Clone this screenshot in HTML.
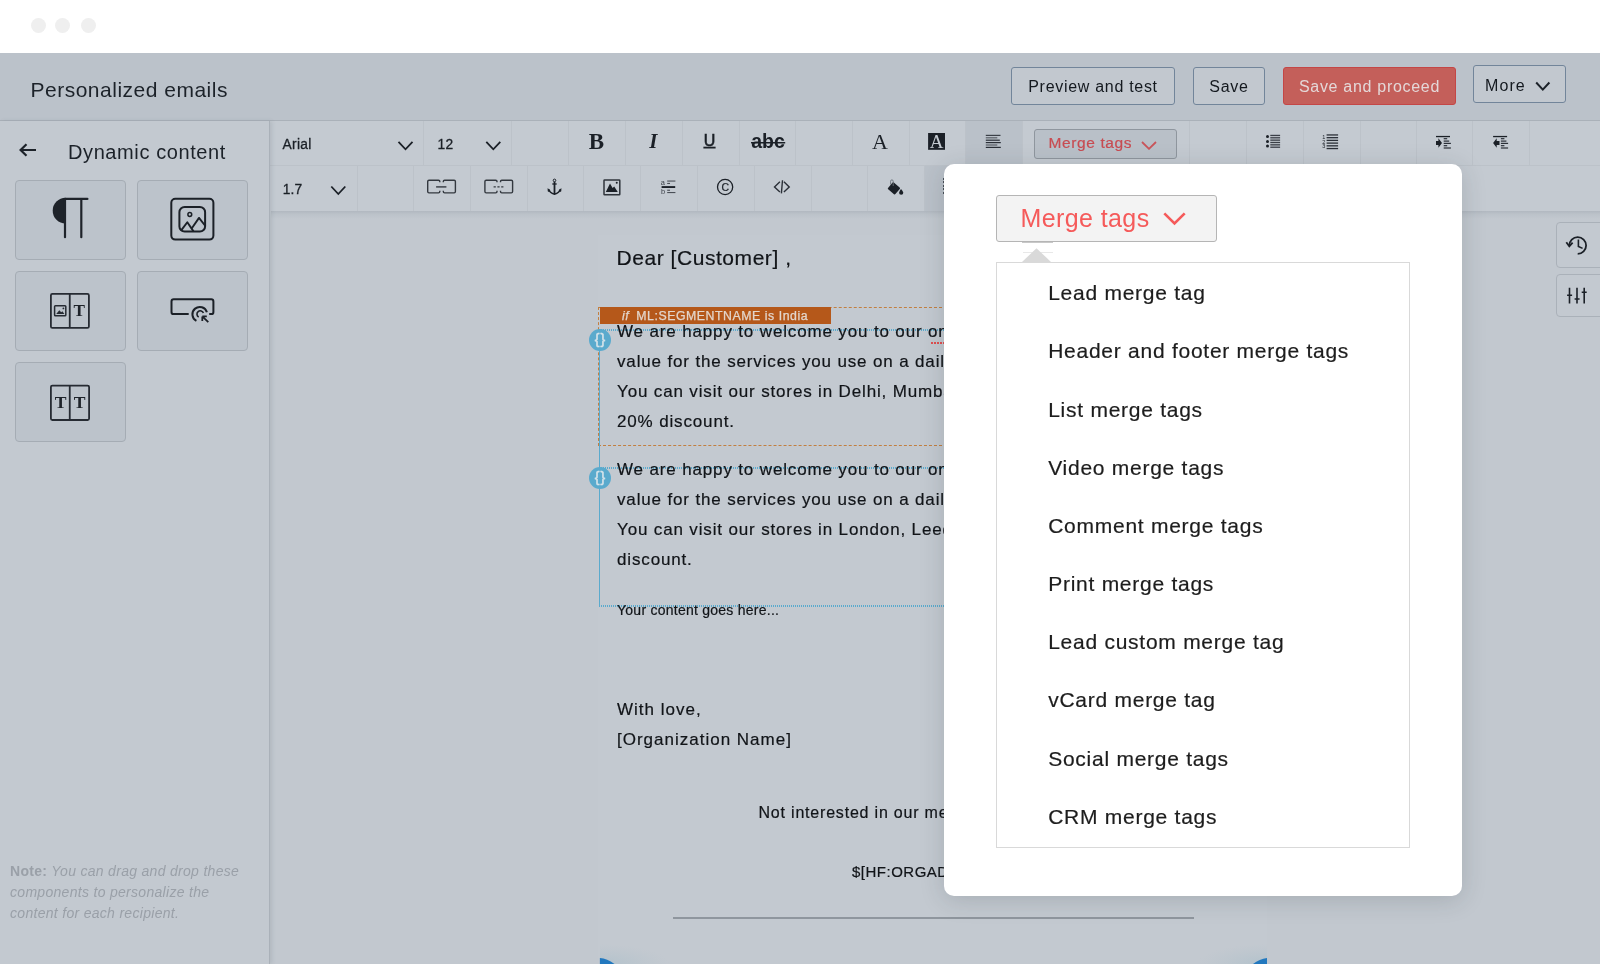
<!DOCTYPE html>
<html><head><meta charset="utf-8">
<style>
*{box-sizing:border-box;margin:0;padding:0}
html,body{will-change:transform;width:1600px;height:964px;overflow:hidden;background:#c2c8cf;font-family:"Liberation Sans",sans-serif;color:#1c2229}
.abs{position:absolute}
#top{left:0;top:0;width:1600px;height:53px;background:#fff}
.dot{position:absolute;top:18px;width:15px;height:15px;border-radius:50%;background:#efefef}
#hdr{left:0;top:53px;width:1600px;height:68px;background:#bbc2ca;border-bottom:1px solid #aab1b9}
#hdr .title{position:absolute;left:30.5px;top:25px;font-size:21px;letter-spacing:0.5px;color:#1c2229;line-height:24px}
.btn{position:absolute;top:14px;height:38px;border:1.5px solid #72859a;border-radius:3px;background:#c2c8cf;font-size:16px;line-height:38px;text-align:center;color:#14191f;letter-spacing:0.7px}
#side{left:0;top:121px;width:270px;height:843px;background:#c3c9d0;border-right:1px solid #aab1b9;box-shadow:2px 0 4px rgba(60,70,80,0.12);z-index:2}
.tile{position:absolute;width:111px;height:80px;border:1px solid #a5acb4;border-radius:4px;background:#bcc3cb}
.tile svg{position:absolute;left:0;top:0}
#tb{left:270px;top:121px;width:1330px;height:90px;background:#c4cad1}
.vd{position:absolute;width:1px;background:#bcc2c9}
.hd{position:absolute;left:0;width:1330px;height:1px;background:#bcc2c9}
#canvas{left:271px;top:211px;width:1329px;height:753px;background:#c2c8cf}
.et{position:absolute;font-size:17px;letter-spacing:0.85px;color:#111418;white-space:nowrap;line-height:20px;-webkit-text-stroke:0.2px #111418}
#modal{left:944px;top:164px;width:518px;height:732px;background:#fff;border-radius:10px;box-shadow:0 4px 24px rgba(30,40,50,0.17);z-index:3}
.bc{position:absolute;width:22px;height:22px;border-radius:50%;background:#5aaacd;color:#d5e3ea;font-size:14px;font-weight:normal;line-height:21px;text-align:center;letter-spacing:1px;text-indent:1px;-webkit-text-stroke:0.5px #d5e3ea}
.dotl{position:absolute;height:2px;background:repeating-linear-gradient(90deg,#5aaacd 0 1px,transparent 1px 2px)}
.mi{position:absolute;left:104.2px;font-size:21px;letter-spacing:0.74px;color:#1d1d1d;white-space:nowrap;line-height:24px;-webkit-text-stroke:0.2px #1d1d1d}
</style></head><body>
<div id="top" class="abs">
  <div class="dot" style="left:31px"></div>
  <div class="dot" style="left:55px"></div>
  <div class="dot" style="left:81px"></div>
</div>
<div id="hdr" class="abs">
  <div class="title">Personalized emails</div>
  <div class="btn" style="left:1011px;width:164px">Preview and test</div>
  <div class="btn" style="left:1193px;width:72px">Save</div>
  <div class="btn" style="left:1283px;width:173px;background:#c45f5a;border-color:#c44646;color:#e4d8d8">Save and proceed</div>
  <div class="btn" style="left:1473px;top:12px;width:93px;text-align:left;padding-left:11px;line-height:40px;letter-spacing:1.1px">More
    <svg class="abs" style="left:60.5px;top:14.5px" width="16" height="11" viewBox="0 0 16 11"><path d="M1.2 1.5 L7.8 8.6 L14.4 1.5" fill="none" stroke="#1c2229" stroke-width="2"/></svg>
  </div>
</div>
<div id="side" class="abs">
  <svg class="abs" style="left:19px;top:22px" width="18" height="14" viewBox="0 0 18 14"><path d="M17 7 H2 M7.5 1.2 L1.6 7 L7.5 12.8" fill="none" stroke="#1c2229" stroke-width="2.2"/></svg>
  <div class="abs" style="left:68px;top:19px;font-size:20px;letter-spacing:0.6px;line-height:24px;color:#1c2229">Dynamic content</div>
  <div class="tile" style="left:15px;top:59px"><svg width="110" height="79" viewBox="0 0 110 79"><path d="M49 17.9 H71.4" stroke="#1e232a" stroke-width="2.2" stroke-linecap="round"/><path d="M49.6 16.8 A12.9 12.9 0 0 0 49.6 42.6 Z" fill="#1e232a"/><path d="M49 18 V56.2" stroke="#1e232a" stroke-width="2.2" stroke-linecap="round"/><path d="M65.3 18 V56.2" stroke="#1e232a" stroke-width="2.2" stroke-linecap="round"/></svg></div>
  <div class="tile" style="left:137px;top:59px"><svg width="110" height="79" viewBox="0 0 110 79"><rect x="33.3" y="17.7" width="42.1" height="40.9" rx="4" fill="none" stroke="#1b2027" stroke-width="2"/><rect x="41.4" y="26" width="25.7" height="24.6" rx="5.2" fill="none" stroke="#1b2027" stroke-width="2"/><circle cx="51.8" cy="33.5" r="1.9" fill="none" stroke="#1b2027" stroke-width="1.5"/><path d="M43 49.6 L49.3 41.2 L55.5 50.4 M54 47 L61 36.9 L67.4 45" fill="none" stroke="#1b2027" stroke-width="1.9" stroke-linejoin="round"/></svg></div>
  <div class="tile" style="left:15px;top:150px"><svg width="110" height="79" viewBox="0 0 110 79"><rect x="34.9" y="21.9" width="38" height="34" rx="1.5" fill="none" stroke="#262b33" stroke-width="1.8"/><path d="M53.75 21.9 V55.9" stroke="#262b33" stroke-width="1.8"/><rect x="38.6" y="33.8" width="11.2" height="9.9" rx="0.8" fill="none" stroke="#262b33" stroke-width="1.5"/><path d="M40.2 41.9 L43.3 38.3 L45.2 40.3 L46.4 39.2 L48.4 41.9 Z" fill="#262b33"/><circle cx="47.4" cy="36.4" r="0.9" fill="#262b33"/><text x="63.35" y="44.4" text-anchor="middle" font-family="Liberation Serif" font-weight="bold" font-size="17.2" fill="#1e232a">T</text></svg></div>
  <div class="tile" style="left:137px;top:150px"><svg width="110" height="79" viewBox="0 0 110 79"><path d="M50.7 42.1 H35.7 Q33.5 42.1 33.5 39.9 V29.5 Q33.5 27.3 35.7 27.3 H73.2 Q75.4 27.3 75.4 29.5 V39.9 Q75.4 42.1 73.2 42.1 H71.2" fill="none" stroke="#1b2027" stroke-width="2"/><path d="M58.4 48.9 A7.4 7.4 0 1 1 68.9 40.2" fill="none" stroke="#1b2027" stroke-width="2"/><path d="M60.7 45 A3.3 3.3 0 1 1 65.4 41.1" fill="none" stroke="#1b2027" stroke-width="1.6"/><path d="M64.3 44.4 L70.3 50.2 M64.3 44.4 V49 M64.3 44.4 H68.8" fill="none" stroke="#1b2027" stroke-width="1.8"/></svg></div>
  <div class="tile" style="left:15px;top:241px"><svg width="110" height="79" viewBox="0 0 110 79"><rect x="34.9" y="22.6" width="38.2" height="34.4" rx="1.5" fill="none" stroke="#262b33" stroke-width="1.8"/><path d="M53.75 22.6 V57" stroke="#262b33" stroke-width="1.8"/><text x="44.55" y="45.2" text-anchor="middle" font-family="Liberation Serif" font-weight="bold" font-size="17.6" fill="#1e232a">T</text><text x="63.55" y="45.2" text-anchor="middle" font-family="Liberation Serif" font-weight="bold" font-size="17.6" fill="#1e232a">T</text></svg></div>
  <div class="abs" style="left:10px;top:740px;width:250px;font-size:14px;line-height:21px;letter-spacing:0.3px;font-style:italic;color:#9aa0a8"><b style="font-style:normal">Note:</b> You can drag and drop these components to personalize the content for each recipient.</div>
</div>
<div id="tb" class="abs"><div class="abs" style="left:695px;top:0;width:56.75px;height:44px;background:#bac1c9"></div><div class="abs" style="left:653.6px;top:45px;width:56.7px;height:45px;background:#bac1c9"></div><div class="vd" style="left:153.4px;top:0;height:44px"></div><div class="vd" style="left:241.4px;top:0;height:44px"></div><div class="vd" style="left:298.2px;top:0;height:44px"></div><div class="vd" style="left:354.8px;top:0;height:44px"></div><div class="vd" style="left:411.7px;top:0;height:44px"></div><div class="vd" style="left:468.5px;top:0;height:44px"></div><div class="vd" style="left:525.2px;top:0;height:44px"></div><div class="vd" style="left:581.6px;top:0;height:44px"></div><div class="vd" style="left:638.5px;top:0;height:44px"></div><div class="vd" style="left:695.0px;top:0;height:44px"></div><div class="vd" style="left:751.8px;top:0;height:44px"></div><div class="vd" style="left:919.0px;top:0;height:44px"></div><div class="vd" style="left:975.8px;top:0;height:44px"></div><div class="vd" style="left:1032.7px;top:0;height:44px"></div><div class="vd" style="left:1089.6px;top:0;height:44px"></div><div class="vd" style="left:1145.6px;top:0;height:44px"></div><div class="vd" style="left:1202.2px;top:0;height:44px"></div><div class="vd" style="left:1259.4px;top:0;height:44px"></div><div class="vd" style="left:86.8px;top:45px;height:45px"></div><div class="vd" style="left:143.2px;top:45px;height:45px"></div><div class="vd" style="left:200.0px;top:45px;height:45px"></div><div class="vd" style="left:256.8px;top:45px;height:45px"></div><div class="vd" style="left:313.4px;top:45px;height:45px"></div><div class="vd" style="left:370.2px;top:45px;height:45px"></div><div class="vd" style="left:427.4px;top:45px;height:45px"></div><div class="vd" style="left:483.5px;top:45px;height:45px"></div><div class="vd" style="left:540.7px;top:45px;height:45px"></div><div class="vd" style="left:597.2px;top:45px;height:45px"></div><div class="vd" style="left:653.6px;top:45px;height:45px"></div><div class="vd" style="left:710.3px;top:45px;height:45px"></div><div class="hd" style="top:44px"></div><svg class="abs" style="left:0;top:0" width="1330" height="90" font-family="Liberation Sans"><text x="12.5" y="27.8" font-size="13.8" letter-spacing="0.3" fill="#1b2027" stroke="#1b2027" stroke-width="0.3">Arial</text><path d="M128.5 20.8 L135.5 28.3 L142.5 20.8" fill="none" stroke="#1b2027" stroke-width="1.8"/><text x="167.5" y="27.8" font-size="13.8" letter-spacing="0.3" fill="#1b2027" stroke="#1b2027" stroke-width="0.3">12</text><path d="M216.3 20.8 L223.3 28.3 L230.3 20.8" fill="none" stroke="#1b2027" stroke-width="1.8"/><text x="326.5" y="28.1" text-anchor="middle" font-family="Liberation Serif" font-weight="bold" font-size="23" fill="#1b2027">B</text><text x="383.3" y="27.4" text-anchor="middle" font-family="Liberation Serif" font-weight="bold" font-style="italic" font-size="21" fill="#1b2027">I</text><text x="439.5" y="24.7" text-anchor="middle" font-size="16" fill="#1b2027" stroke="#1b2027" stroke-width="0.6">U</text><rect x="433.4" y="25.7" width="12.2" height="1.8" fill="#1b2027"/><text x="498" y="27.4" text-anchor="middle" font-weight="bold" font-size="19.5" fill="#1b2027">abc</text><rect x="481" y="21" width="34.2" height="1.5" fill="#1b2027"/><text x="610" y="27.9" text-anchor="middle" font-family="Liberation Serif" font-size="22" fill="#1b2027">A</text><rect x="658.1" y="12" width="16.9" height="16.8" fill="#1b2027"/><text x="666.6" y="27" text-anchor="middle" font-family="Liberation Serif" font-size="19" fill="#c4cad1">A</text><rect x="715.8" y="13.8" width="14.7" height="1.2" fill="#3b4048"/><rect x="715.8" y="16.2" width="11.5" height="1.2" fill="#5a6068"/><rect x="715.8" y="18.6" width="14" height="1.2" fill="#2b3038"/><rect x="715.8" y="21" width="15" height="1.2" fill="#2b3038"/><rect x="715.8" y="23.4" width="11.5" height="1.2" fill="#5a6068"/><rect x="715.8" y="25.8" width="15" height="1.2" fill="#2b3038"/><circle cx="997.5" cy="15.6" r="1.5" fill="#1b2027"/><circle cx="997.5" cy="20.4" r="1.5" fill="#1b2027"/><circle cx="997.5" cy="24.9" r="1.5" fill="#1b2027"/><rect x="1000.3" y="13.80" width="9.8" height="1.3" fill="#3a3f47"/><rect x="1000.3" y="16.15" width="9.8" height="1.3" fill="#3a3f47"/><rect x="1000.3" y="18.50" width="9.8" height="1.3" fill="#3a3f47"/><rect x="1000.3" y="20.85" width="9.8" height="1.3" fill="#3a3f47"/><rect x="1000.3" y="23.20" width="9.8" height="1.3" fill="#3a3f47"/><rect x="1000.3" y="25.55" width="9.8" height="1.3" fill="#3a3f47"/><text x="1053.8" y="17.6" text-anchor="middle" font-size="5.5" fill="#1b2027">1</text><text x="1053.8" y="22.6" text-anchor="middle" font-size="5.5" fill="#1b2027">2</text><text x="1053.8" y="27.3" text-anchor="middle" font-size="5.5" fill="#1b2027">3</text><rect x="1056.6" y="13.30" width="11.5" height="1.3" fill="#2b3038"/><rect x="1056.6" y="16.02" width="11.5" height="1.3" fill="#2b3038"/><rect x="1056.6" y="18.74" width="11.5" height="1.3" fill="#2b3038"/><rect x="1056.6" y="21.46" width="11.5" height="1.3" fill="#2b3038"/><rect x="1056.6" y="24.18" width="11.5" height="1.3" fill="#2b3038"/><rect x="1056.6" y="26.90" width="11.5" height="1.3" fill="#2b3038"/><rect x="1166" y="14.9" width="14" height="1.3" fill="#1b2027"/><path d="M1172 21.9 L1168.4 17.2 V19.9 H1166 V23.9 H1168.4 V26.8 Z" fill="#1b2027"/><rect x="1173.7" y="17.1" width="3.5" height="1.2" fill="#2b3038"/><rect x="1173.7" y="19.5" width="5.5" height="1.2" fill="#2b3038"/><rect x="1173.7" y="21.8" width="7.2" height="1.2" fill="#2b3038"/><rect x="1173.7" y="24.1" width="3.5" height="1.2" fill="#2b3038"/><rect x="1173.7" y="26.4" width="7.2" height="1.2" fill="#2b3038"/><rect x="1223.1" y="14.9" width="14" height="1.3" fill="#1b2027"/><path d="M1223.1 21.9 L1226.6999999999998 17.2 V19.9 H1229.5 V23.9 H1226.6999999999998 V26.8 Z" fill="#1b2027"/><rect x="1230.8999999999999" y="17.1" width="3.5" height="1.2" fill="#2b3038"/><rect x="1230.8999999999999" y="19.5" width="5.5" height="1.2" fill="#2b3038"/><rect x="1230.8999999999999" y="21.8" width="7.2" height="1.2" fill="#2b3038"/><rect x="1230.8999999999999" y="24.1" width="3.5" height="1.2" fill="#2b3038"/><rect x="1230.8999999999999" y="26.4" width="7.2" height="1.2" fill="#2b3038"/><text x="12.7" y="72.8" font-size="13.8" letter-spacing="0.2" fill="#1b2027" stroke="#1b2027" stroke-width="0.3">1.7</text><path d="M61.3 65.5 L68.3 73.0 L75.3 65.5" fill="none" stroke="#1b2027" stroke-width="1.8"/><path d="M169.8 61.3 V60.5 Q169.8 59.2 168.5 59.2 H159 Q157.7 59.2 157.7 60.5 V70.6 Q157.7 71.9 159 71.9 H168.5 Q169.8 71.9 169.8 70.6 V69.8" fill="none" stroke="#33383f" stroke-width="1.4"/><path d="M173.3 61.3 V60.5 Q173.3 59.2 174.6 59.2 H184.1 Q185.4 59.2 185.4 60.5 V70.6 Q185.4 71.9 184.1 71.9 H174.6 Q173.3 71.9 173.3 70.6 V69.8" fill="none" stroke="#33383f" stroke-width="1.4"/><path d="M166.1 65.9 H176.4" stroke="#33383f" stroke-width="1.4"/><path d="M227.0 61.3 V60.5 Q227.0 59.2 225.7 59.2 H216.2 Q214.89999999999998 59.2 214.89999999999998 60.5 V70.6 Q214.89999999999998 71.9 216.2 71.9 H225.7 Q227.0 71.9 227.0 70.6 V69.8" fill="none" stroke="#33383f" stroke-width="1.4"/><path d="M230.5 61.3 V60.5 Q230.5 59.2 231.79999999999998 59.2 H241.29999999999998 Q242.6 59.2 242.6 60.5 V70.6 Q242.6 71.9 241.29999999999998 71.9 H231.79999999999998 Q230.5 71.9 230.5 70.6 V69.8" fill="none" stroke="#33383f" stroke-width="1.4"/><path d="M223.6 65.9 H234.0" stroke="#33383f" stroke-width="1.2" stroke-dasharray="2.2 1.6"/><circle cx="284.5" cy="59.4" r="1.3" fill="none" stroke="#1b2027" stroke-width="1"/><path d="M284.5 60.8 V73" stroke="#1b2027" stroke-width="1.8"/><path d="M282.3 63 H286.7" stroke="#1b2027" stroke-width="1.3"/><path d="M278.7 68.2 Q279.5 72 284.5 73.2 Q289.5 72 290.3 68.2" fill="none" stroke="#1b2027" stroke-width="1.4"/><path d="M278.0 67.7 L280.0 69.8 L278.2 70.4 Z M291.0 67.7 L289.0 69.8 L290.8 70.4 Z" fill="#1b2027" stroke="#1b2027" stroke-width="0.8"/><rect x="334" y="58.9" width="15.8" height="14.9" rx="0.6" fill="none" stroke="#2f343b" stroke-width="1.5"/><path d="M335.8 71 L340 62.6 L342.6 67 L344.2 65.4 L347.8 71 Z" fill="#1b2027"/><circle cx="346.75" cy="61.65" r="1" fill="#1b2027"/><text x="390.8" y="63.6" font-size="7.4" fill="#3a3f47">a</text><text x="390.9" y="73" font-size="7.4" fill="#3a3f47">b</text><rect x="397.2" y="59.5" width="8.2" height="1.1" fill="#4a4f57"/><rect x="397.2" y="61.9" width="2.8" height="1.1" fill="#4a4f57"/><rect x="391.6" y="65.1" width="13.6" height="1.9" fill="#1b2027"/><rect x="397.2" y="68.7" width="2.8" height="1.1" fill="#4a4f57"/><rect x="397.2" y="71" width="8.2" height="1.1" fill="#4a4f57"/><circle cx="455.1" cy="66" r="7.6" fill="none" stroke="#1b2027" stroke-width="1.3"/><text x="455.3" y="69.8" text-anchor="middle" font-size="10.5" fill="#1b2027" stroke="#1b2027" stroke-width="0.2">C</text><path d="M509.9 60.7 L504.5 65.9 L509.9 71 M513.9 60.7 L519.25 65.9 L513.9 71 M512.5 59.3 L511.4 72.4" fill="none" stroke="#2b3038" stroke-width="1.4"/><g transform="translate(623.9 67.4) rotate(40)"><rect x="-4.8" y="-4.4" width="9.6" height="8.8" rx="1" fill="#1b2027"/></g><path d="M620.6 63.5 V60.2 A1.3 1.3 0 0 1 623.2 60.2 V65" fill="none" stroke="#6a7078" stroke-width="0.9"/><path d="M631 68 Q633.3 70.5 633.3 71.7 A2 2 0 0 1 629.1 71.7 Q629.1 70.5 631 68 Z" fill="#1b2027"/></svg><div class="abs" style="left:764.3px;top:8px;width:142.3px;height:30.4px;border:1px solid #8f969e;border-radius:3px;background:#b9c0c8"></div><div class="abs" style="left:778.6px;top:12.8px;font-size:15.5px;letter-spacing:0.6px;line-height:18px;color:#c84c52;-webkit-text-stroke:0.2px #c84c52">Merge tags</div><svg class="abs" style="left:871px;top:19.5px" width="16" height="9"><path d="M1 1 L8 7.8 L15 1" fill="none" stroke="#c9545a" stroke-width="1.8"/></svg></div>
<div class="abs" style="left:942.5px;top:178px;width:1px;height:17px;z-index:1;background:repeating-linear-gradient(180deg,#4a5058 0 2px,transparent 2px 3.5px)"></div>
<div id="canvas" class="abs">
  <div class="abs" style="left:0;top:0;width:1329px;height:8px;background:linear-gradient(#b1b8c0,rgba(178,185,193,0.4) 40%,rgba(194,200,207,0))"></div>
  <div class="abs" style="left:327px;top:24px;width:669px;height:729px;background:#c3c9d0"></div>

</div>
<div class="et" style="left:616.5px;top:247px;font-size:21px;letter-spacing:0.55px;line-height:22px">Dear [Customer] ,</div>
<div class="abs" style="left:598px;top:306.5px;width:680px;height:139.5px;border:1px dashed #c27f40;border-right:none"></div>
<div class="abs" style="left:599.5px;top:306.5px;width:231.5px;height:17.5px;background:#b5581a"></div>
<div class="abs" style="left:622px;top:308.8px;font-size:12.3px;line-height:15px;color:#e3d6cc;white-space:nowrap;letter-spacing:0.55px;-webkit-text-stroke:0.25px #e3d6cc"><i style="margin-right:7px">if</i>ML:SEGMENTNAME is India</div>
<div class="dotl" style="left:599px;top:329px;width:680px"></div>
<div class="et" style="left:617px;top:317px;line-height:30px">We are happy to welcome you to our online store. We<br>value for the services you use on a daily basis.<br>You can visit our stores in Delhi, Mumbai and Chennai for a<br>20% discount.</div>
<div class="abs" style="left:598.5px;top:339px;width:1.5px;height:267px;background:#5aaacd"></div>
<div class="dotl" style="left:599px;top:467px;width:680px"></div>
<div class="dotl" style="left:599px;top:605px;width:680px"></div>
<div class="et" style="left:617px;top:455px;line-height:30px">We are happy to welcome you to our online store. We<br>value for the services you use on a daily basis.<br>You can visit our stores in London, Leeds and York for a 20%<br>discount.</div>
<div class="bc" style="left:589px;top:329px">{}</div>
<div class="abs" style="left:931px;top:341.5px;width:13px;height:2px;background:repeating-linear-gradient(90deg,#e05050 0 1.5px,transparent 1.5px 3px)"></div>
<div class="bc" style="left:589px;top:466.7px">{}</div>
<div class="et" style="left:617px;top:602px;font-size:14px;letter-spacing:0.25px;line-height:16px">Your content goes here...</div>
<div class="et" style="left:617px;top:695px;line-height:30px;letter-spacing:1px">With love,<br>[Organization Name]</div>
<div class="et" style="left:758.5px;top:803px;font-size:16px;letter-spacing:0.8px">Not interested in our mess</div>
<div class="et" style="left:852px;top:862px;font-size:15px;letter-spacing:0.5px">$[HF:ORGADDRESS]</div>
<div class="abs" style="left:673px;top:917px;width:521px;height:2px;background:#8f969e"></div>
<svg class="abs" style="left:0;top:0;z-index:1" width="1600" height="964" viewBox="0 0 1600 964"><defs><radialGradient id="bgL" cx="0" cy="1" r="1"><stop offset="0" stop-color="#b2c2cc"/><stop offset="1" stop-color="#b8c4cc" stop-opacity="0"/></radialGradient><radialGradient id="bgR" cx="1" cy="1" r="1"><stop offset="0" stop-color="#b2c2cc"/><stop offset="1" stop-color="#b8c4cc" stop-opacity="0"/></radialGradient></defs><rect x="600" y="944" width="70" height="20" fill="url(#bgL)"/><rect x="1197" y="944" width="70" height="20" fill="url(#bgR)"/><path d="M599.9 958 Q607 958.6 614.5 964 L599.9 964 Z" fill="#2278be"/><path d="M1267 958 Q1259.5 958.8 1253 964 L1267 964 Z" fill="#2278be"/></svg>


<div class="abs" style="left:1555.5px;top:221.5px;width:50px;height:46px;border:1px solid #aab1b9;border-radius:4px;background:#c3c9d0"></div>
<div class="abs" style="left:1555.5px;top:273.7px;width:50px;height:43.5px;border:1px solid #aab1b9;border-radius:4px;background:#c3c9d0"></div>
<svg class="abs" style="left:1550px;top:220px" width="50" height="100" viewBox="1550 220 50 100">
  <path d="M1569.3 245.5 A8.4 8.4 0 1 1 1577.7 253.9" fill="none" stroke="#1b2027" stroke-width="1.8"/>
  <path d="M1566.3 242.3 L1569.3 246.3 L1572.6 242.6" fill="none" stroke="#1b2027" stroke-width="1.8"/>
  <path d="M1578.4 239.6 V246.4 L1582.6 248.4" fill="none" stroke="#1b2027" stroke-width="1.6"/>
  <path d="M1569.5 287.8 V303.4 M1577 287.8 V303.4 M1584.2 287.8 V303.4" stroke="#1b2027" stroke-width="1.6"/>
  <path d="M1567.1 295.3 H1572.1 M1574.6 299 H1579.6 M1581.7 292.2 H1586.7" stroke="#1b2027" stroke-width="1.6"/>
</svg>
<div id="modal" class="abs">
  <div class="abs" style="left:52px;top:31px;width:221px;height:47px;border:1.5px solid #b5b5b5;border-radius:3px;background:#f3f3f3"></div>
  <div class="abs" style="left:76.5px;top:39px;font-size:25px;line-height:30px;color:#f55a5a;letter-spacing:0.4px">Merge tags</div>
  <svg class="abs" style="left:219px;top:48px" width="24" height="14"><path d="M1.3 1.3 L11.5 11.5 L21.7 1.3" fill="none" stroke="#f55a5a" stroke-width="2.6"/></svg>
  <div class="abs" style="left:78px;top:77.5px;width:31px;height:1.5px;background:#c8c8c8"></div>
  <div class="abs" style="left:79px;top:87.5px;width:30px;height:1px;background:#e8e8e8"></div>
  <svg class="abs" style="left:77px;top:83px" width="32" height="16"><path d="M1 15 L15.5 1.2 L30 15 Z" fill="#d9d9d9"/></svg>
  <div class="abs" style="left:52px;top:98px;width:414px;height:586px;border:1.5px solid #d9d9d9;background:#fff"></div>
  <div class="mi" style="top:117.20px">Lead merge tag</div><div class="mi" style="top:175.38px">Header and footer merge tags</div><div class="mi" style="top:233.56px">List merge tags</div><div class="mi" style="top:291.74px">Video merge tags</div><div class="mi" style="top:349.92px">Comment merge tags</div><div class="mi" style="top:408.10px">Print merge tags</div><div class="mi" style="top:466.28px">Lead custom merge tag</div><div class="mi" style="top:524.46px">vCard merge tag</div><div class="mi" style="top:582.64px">Social merge tags</div><div class="mi" style="top:640.82px">CRM merge tags</div>
</div>
</body></html>
